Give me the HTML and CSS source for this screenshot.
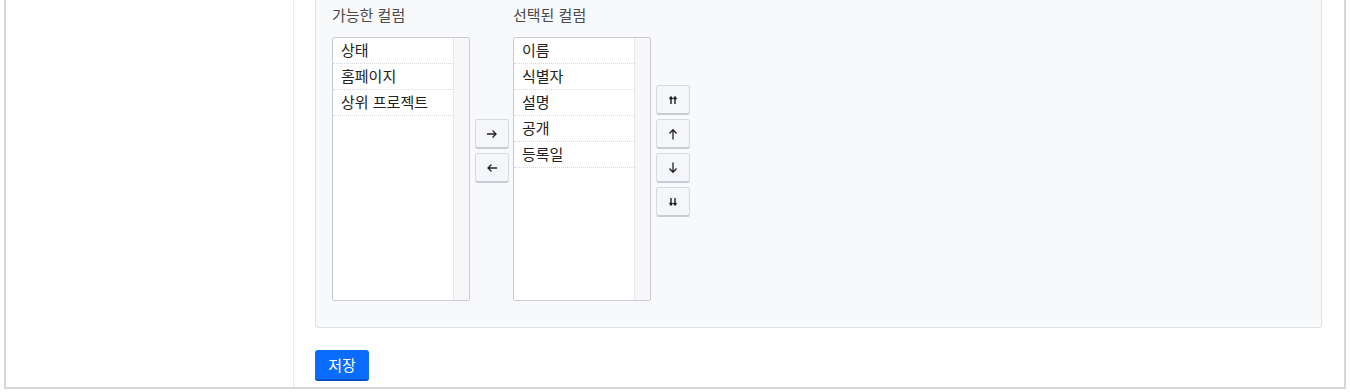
FILE: index.html
```html
<!DOCTYPE html>
<html lang="ko">
<head>
    <meta charset="UTF-8">
    <title>컬럼 설정</title>
    <link rel="stylesheet" href="styles.css">
</head>
<body>
    <div class="frame">
        <aside class="sidebar"></aside>

        <main class="content">
            <div class="panel">
                <div class="picker">
                    <div class="picker-col">
                        <label class="picker-label">가능한 컬럼</label>
                        <div class="list">
                            <ul class="list-items">
                                <li>상태</li>
                                <li>홈페이지</li>
                                <li>상위 프로젝트</li>
                            </ul>
                            <div class="list-scroll"></div>
                        </div>
                    </div>

                    <div class="move-buttons middle">
                        <button class="small-btn" title="추가">
                            <svg width="12" height="10" viewBox="0 0 12 10"><path d="M1 5h9M6.5 1.5 10 5 6.5 8.5" fill="none" stroke="#222" stroke-width="1.3"/></svg>
                        </button>
                        <button class="small-btn" title="제거">
                            <svg width="12" height="10" viewBox="0 0 12 10"><path d="M11 5H2M5.5 1.5 2 5 5.5 8.5" fill="none" stroke="#222" stroke-width="1.3"/></svg>
                        </button>
                    </div>

                    <div class="picker-col">
                        <label class="picker-label">선택된 컬럼</label>
                        <div class="list">
                            <ul class="list-items">
                                <li>이름</li>
                                <li>식별자</li>
                                <li>설명</li>
                                <li>공개</li>
                                <li>등록일</li>
                            </ul>
                            <div class="list-scroll"></div>
                        </div>
                    </div>

                    <div class="move-buttons side">
                        <button class="small-btn" title="맨 위로">
                            <svg width="8" height="8" viewBox="0 0 8 8"><path d="M2 8V1.5M6 8V1.5M0.5 3 2 1 3.5 3M4.5 3 6 1 7.5 3" fill="none" stroke="#222" stroke-width="1.4"/></svg>
                        </button>
                        <button class="small-btn" title="위로">
                            <svg width="10" height="12" viewBox="0 0 10 12"><path d="M5 11.5V2M1.5 5.5 5 1.8 8.5 5.5" fill="none" stroke="#222" stroke-width="1.3"/></svg>
                        </button>
                        <button class="small-btn" title="아래로">
                            <svg width="10" height="12" viewBox="0 0 10 12"><path d="M5 0.5V10M1.5 6.5 5 10.2 8.5 6.5" fill="none" stroke="#222" stroke-width="1.3"/></svg>
                        </button>
                        <button class="small-btn" title="맨 아래로">
                            <svg width="8" height="8" viewBox="0 0 8 8"><path d="M2 0V6.5M6 0V6.5M0.5 5 2 7 3.5 5M4.5 5 6 7 7.5 5" fill="none" stroke="#222" stroke-width="1.4"/></svg>
                        </button>
                    </div>
                </div>
            </div>

            <button class="save-btn">저장</button>
        </main>
    </div>
</body>
</html>
```

FILE: styles.css
```css
* {
    margin: 0;
    padding: 0;
    box-sizing: border-box;
    font-family: 'Noto Sans CJK KR', 'Noto Sans', sans-serif;
}

body {
    background: #fff;
    padding: 0 4px;
    height: 392px;
    overflow: hidden;
}

.frame {
    display: flex;
    height: 389px;
    border: 2px solid #d6d6d6;
    border-top: none;
}

.sidebar {
    width: 288px;
    flex-shrink: 0;
    border-right: 1px solid #e6e7eb;
}

.content {
    flex: 1;
    padding: 0 22px 0 21px;
    box-shadow: inset 3px 0 3px -2px rgba(0,0,0,0.04);
}

.panel {
    height: 328px;
    background: #f8f9fb;
    border: 1px solid #dfe0e6;
    border-top: none;
    border-radius: 0 0 4px 4px;
    padding: 0 16px;
}

.picker {
    display: flex;
    align-items: flex-start;
}

.picker-col {
    display: flex;
    flex-direction: column;
    width: 138px;
}

.picker-label {
    font-size: 15px;
    line-height: 22px;
    color: #4a4a4a;
    padding-top: 4px;
    height: 37px;
}

.list {
    display: flex;
    height: 264px;
    background: #fff;
    border: 1px solid #c9cad2;
    border-radius: 2px;
}

.list-items {
    list-style: none;
    flex: 1;
}

.list-items li {
    height: 26px;
    line-height: 24px;
    padding-left: 8px;
    font-size: 15px;
    color: #222;
    border-bottom: 1px dotted #d5d6db;
}

.list-scroll {
    width: 16px;
    background: #f7f7f9;
    border-left: 1px solid #e6e6ea;
}

.move-buttons {
    display: flex;
    flex-direction: column;
    gap: 4px;
}

.middle {
    margin: 119px 4px 0 5px;
}

.side {
    margin: 85px 0 0 5px;
}

.small-btn {
    width: 34px;
    height: 30px;
    display: flex;
    align-items: center;
    justify-content: center;
    background: #f5f6f9;
    border: 1px solid #d9dae1;
    border-bottom: 2px solid #c9cad3;
    border-radius: 3px;
    cursor: pointer;
}

.save-btn {
    margin-top: 22px;
    width: 54px;
    height: 31px;
    background: #0a6cff;
    color: #fff;
    font-size: 15px;
    border: none;
    border-bottom: 2px solid #0050c8;
    border-radius: 3px;
    cursor: pointer;
}
```
